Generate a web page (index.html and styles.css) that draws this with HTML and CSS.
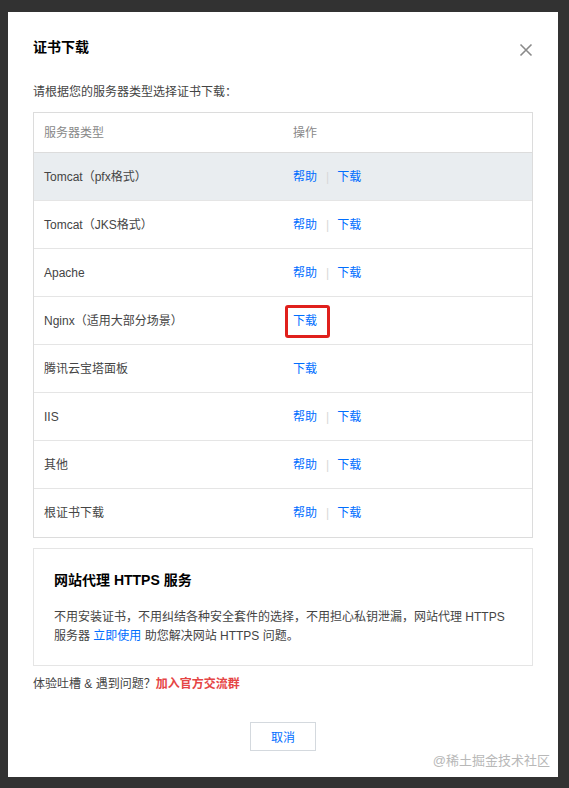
FILE: index.html
```html
<!DOCTYPE html>
<html lang="zh-CN">
<head>
<meta charset="utf-8">
<title>证书下载</title>
<link rel="stylesheet" href="styles.css">
</head>
<body>
<div class="modal">
  <div class="modal-head">
    <h3 class="modal-title">证书下载</h3>
    <span class="close" aria-label="关闭">
      <svg width="14" height="14" viewBox="0 0 14 14"><path d="M1.5 1.5 L12.5 12.5 M12.5 1.5 L1.5 12.5" stroke="#8a8a8a" stroke-width="1.6" fill="none"/></svg>
    </span>
  </div>
  <p class="desc">请根据您的服务器类型选择证书下载：</p>
  <div class="table">
    <div class="row head"><div class="cell">服务器类型</div><div class="cell">操作</div></div>
    <div class="row hover"><div class="cell">Tomcat（pfx格式）</div><div class="cell"><a class="link">帮助</a><span class="sep">|</span><a class="link">下载</a></div></div>
    <div class="row"><div class="cell">Tomcat（JKS格式）</div><div class="cell"><a class="link">帮助</a><span class="sep">|</span><a class="link">下载</a></div></div>
    <div class="row"><div class="cell">Apache</div><div class="cell"><a class="link">帮助</a><span class="sep">|</span><a class="link">下载</a></div></div>
    <div class="row"><div class="cell">Nginx（适用大部分场景）</div><div class="cell"><a class="link marked">下载</a></div></div>
    <div class="row"><div class="cell">腾讯云宝塔面板</div><div class="cell"><a class="link">下载</a></div></div>
    <div class="row"><div class="cell">IIS</div><div class="cell"><a class="link">帮助</a><span class="sep">|</span><a class="link">下载</a></div></div>
    <div class="row"><div class="cell">其他</div><div class="cell"><a class="link">帮助</a><span class="sep">|</span><a class="link">下载</a></div></div>
    <div class="row last"><div class="cell">根证书下载</div><div class="cell"><a class="link">帮助</a><span class="sep">|</span><a class="link">下载</a></div></div>
  </div>
  <div class="promo">
    <h4 class="promo-title">网站代理 HTTPS 服务</h4>
    <p class="promo-text">不用安装证书，不用纠结各种安全套件的选择，不用担心私钥泄漏，网站代理 HTTPS 服务器 <a class="link">立即使用</a> 助您解决网站 HTTPS 问题。</p>
  </div>
  <p class="feedback">体验吐槽 &amp; 遇到问题？<a class="red">加入官方交流群</a></p>
  <div class="actions"><button class="btn">取消</button></div>
</div>
<div class="watermark">@稀土掘金技术社区</div>
</body>
</html>
```

FILE: styles.css
```css
* { box-sizing: border-box; }
html, body { margin: 0; padding: 0; }
body {
  background: #323232;
  width: 569px;
  height: 788px;
  padding: 12px 0 0 8px;
  font-family: "Liberation Sans", "Noto Sans CJK SC", sans-serif;
  font-size: 12px;
  color: #444;
  position: relative;
  overflow: hidden;
}
.modal {
  width: 550px;
  height: 765px;
  background: #fff;
  padding: 25px 25px 26px 25px;
  display: flex;
  flex-direction: column;
}
.modal-head {
  display: flex;
  justify-content: space-between;
  align-items: flex-start;
}
.modal-title {
  margin: 0;
  font-size: 14px;
  line-height: 20px;
  font-weight: bold;
  color: #000;
}
.close {
  display: block;
  width: 14px;
  height: 14px;
  margin-top: 6px;
}
.close svg { display: block; }
.desc {
  margin: 26px 0 11px 0;
  line-height: 18px;
  color: #444;
}
.table {
  border: 1px solid #dcdcdc;
}
.row {
  display: grid;
  grid-template-columns: 249px 1fr;
  height: 48px;
  border-bottom: 1px solid #e5e5e5;
  align-items: center;
}
.row.head {
  height: 40px;
  color: #888;
  border-bottom-color: #dcdcdc;
}
.row.last { border-bottom: none; height: 48px; }
.row.hover { background: #e9edf0; }
.cell {
  padding-left: 10px;
  line-height: 18px;
  display: flex;
  align-items: center;
}
.link {
  color: #006eff;
  text-decoration: none;
  cursor: pointer;
}
.sep {
  color: #d8d8d8;
  margin: 0 8px 0 9px;
}
.marked { position: relative; }
.marked::after {
  content: "";
  position: absolute;
  left: -8px;
  right: -13px;
  top: -7px;
  bottom: -8px;
  border: 3px solid #e0201c;
  border-radius: 3px;
}
.promo {
  margin-top: 10px;
  border: 1px solid #e5e5e5;
  padding: 21px 20px 19px 20px;
}
.promo-title {
  margin: 0;
  font-size: 14px;
  line-height: 20px;
  font-weight: bold;
  color: #000;
}
.promo-text {
  margin: 18px 0 0 0;
  line-height: 19px;
  color: #444;
}
.feedback {
  margin: 8px 0 0 0;
  line-height: 20px;
  color: #444;
}
.red {
  color: #e54545;
  font-weight: bold;
}
.actions {
  margin-top: auto;
  display: flex;
  justify-content: center;
}
.btn {
  width: 66px;
  height: 29px;
  background: #fff;
  border: 1px solid #d4d9de;
  color: #006eff;
  font-family: inherit;
  font-size: 12px;
  padding: 0;
}
.watermark {
  position: absolute;
  right: 19px;
  top: 752px;
  font-size: 13px;
  line-height: 18px;
  color: #b8b8b8;
}
```
